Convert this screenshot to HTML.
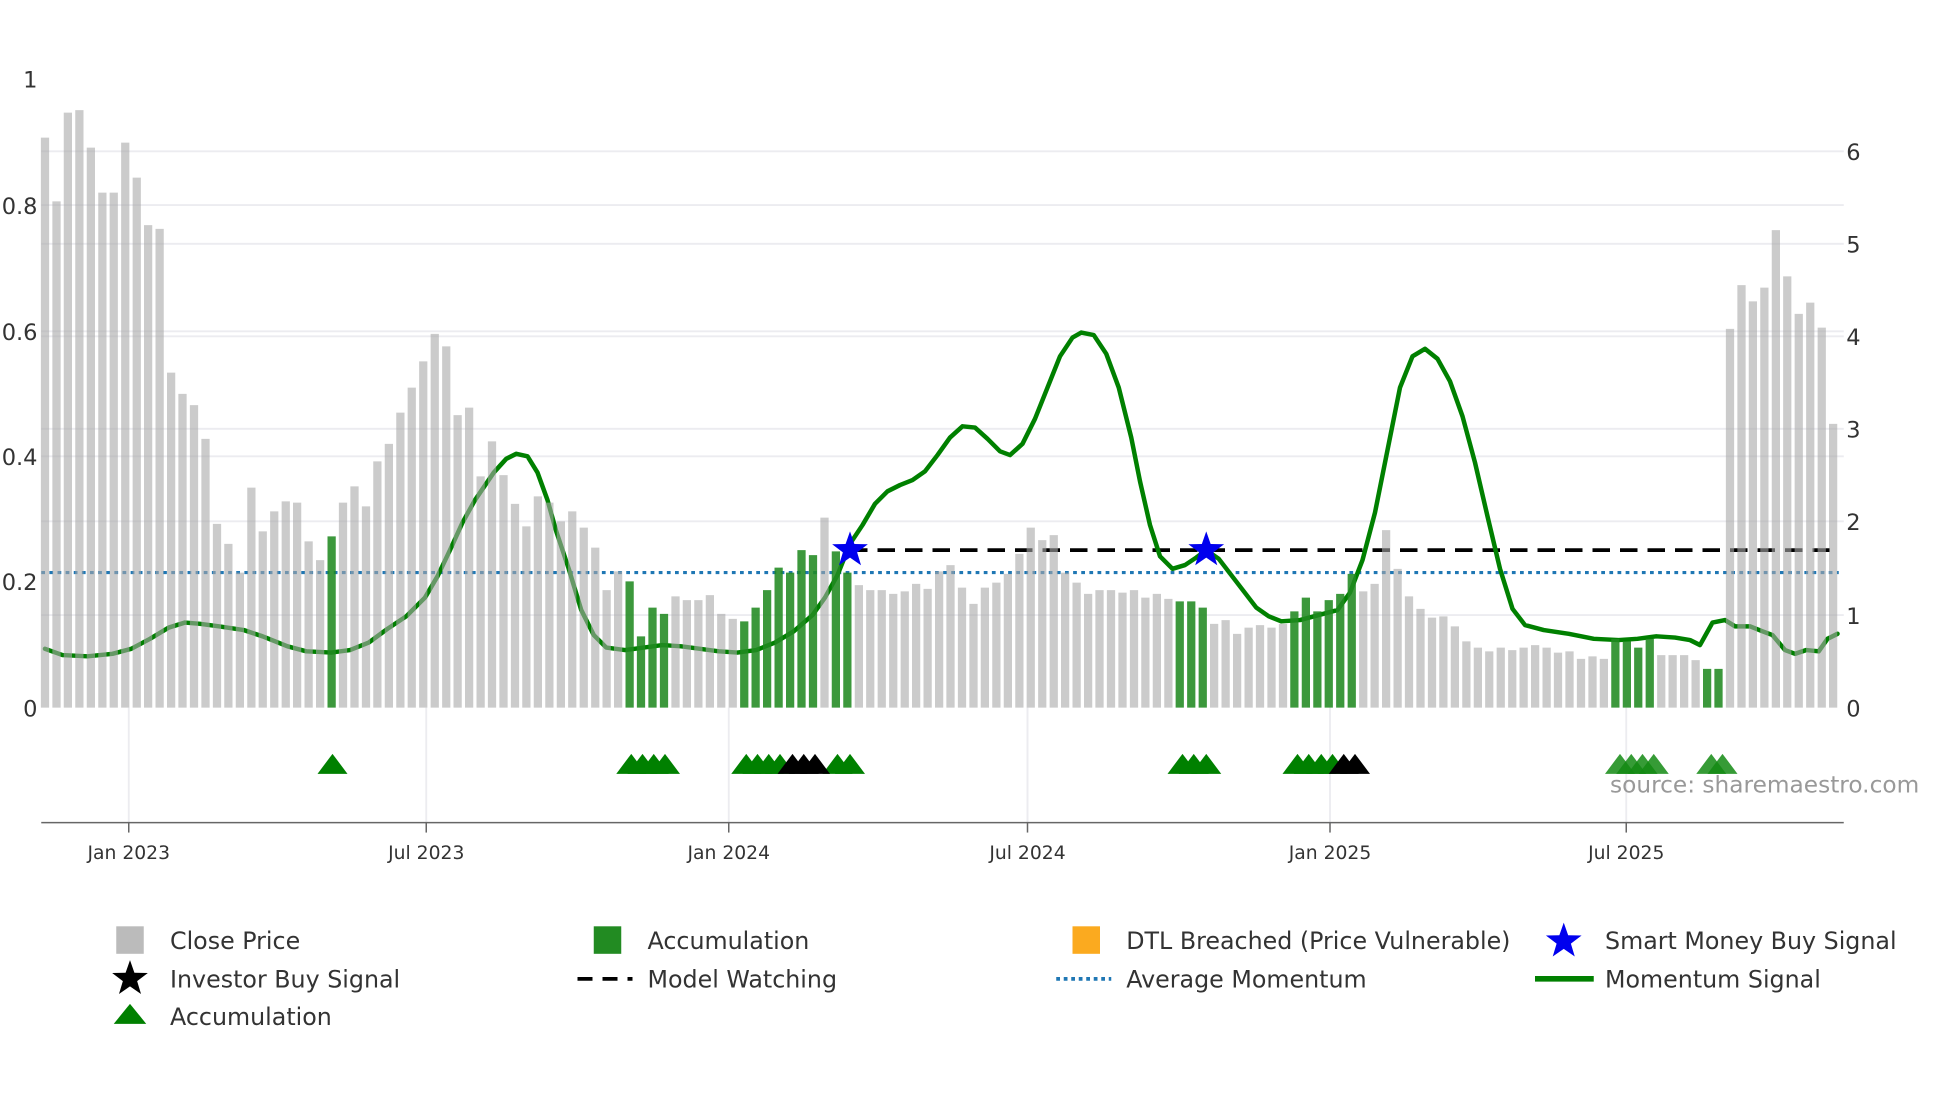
<!DOCTYPE html>
<html><head><meta charset="utf-8"><style>
html,body{margin:0;padding:0;background:#fff;}
svg{display:block;font-family:"DejaVu Sans","Liberation Sans",sans-serif;}
</style></head><body>
<svg width="1960" height="1102" viewBox="0 0 1568 881.5" xmlns="http://www.w3.org/2000/svg">
<g stroke="#ececf0" stroke-width="1.5">
<line x1="33" x2="1475" y1="121" y2="121"/><line x1="33" x2="1475" y1="195" y2="195"/>
<line x1="33" x2="1475" y1="269" y2="269"/><line x1="33" x2="1475" y1="343" y2="343"/>
<line x1="33" x2="1475" y1="417" y2="417"/><line x1="33" x2="1475" y1="492" y2="492"/>
<line x1="33" x2="1475" y1="164" y2="164"/><line x1="33" x2="1475" y1="265" y2="265"/>
<line x1="33" x2="1475" y1="365" y2="365"/>
<line x1="103" x2="103" y1="566" y2="658"/><line x1="341" x2="341" y1="566" y2="658"/>
<line x1="583" x2="583" y1="566" y2="658"/><line x1="822" x2="822" y1="566" y2="658"/>
<line x1="1064" x2="1064" y1="566" y2="658"/><line x1="1301" x2="1301" y1="566" y2="658"/>
</g>
<line x1="33" x2="1471" y1="458" y2="458" stroke="#1f77b4" stroke-width="2.5" stroke-dasharray="3,3.5"/>
<line x1="680" x2="1471" y1="440" y2="440" stroke="#000" stroke-width="3" stroke-dasharray="14,8"/>
<polyline fill="none" stroke="#008000" stroke-width="3.6" stroke-linejoin="round" stroke-linecap="round" points="36,519 50,524 70,525 90,523 105,519 120,511 135,502 148,498 160,499 175,501 195,504 210,509 230,517 245,521 265,522 280,520 295,514 310,503 325,493 340,478 350,461 360,440 370,418 380,400 395,378 405,367 413,363 422,365 430,378 438,400 445,425 455,455 465,488 475,508 485,518 500,520 515,518 530,516 545,517 560,519 575,521 590,522 605,520 620,514 635,505 650,492 660,478 670,460 680,435 690,420 700,403 710,393 720,388 730,384 740,377 750,364 760,350 770,341 780,342 790,351 800,361 808,364 818,355 828,335 838,310 848,285 858,270 865,266 875,268 885,283 895,310 905,350 912,385 920,420 928,445 938,455 948,452 957,446 965,440 975,447 985,460 995,473 1005,486 1015,493 1025,497 1040,496 1055,492 1070,488 1080,474 1090,448 1100,410 1110,360 1120,310 1130,285 1140,279 1150,287 1160,305 1170,333 1180,370 1190,413 1200,455 1210,487 1220,500 1235,504 1255,507 1275,511 1295,512 1310,511 1325,509 1340,510 1352,512 1360,516 1370,498 1380,496 1388,501 1400,501 1410,505 1418,508 1428,520 1436,523 1445,520 1455,521 1462,511 1470,507"/>
<path fill="#a8a8a8" fill-opacity="0.6" d="M32.7 110h6.6V566h-6.6z M41.9 161h6.6V566h-6.6z M51 90h6.6V566h-6.6z M60.2 88h6.6V566h-6.6z M69.4 118h6.6V566h-6.6z M78.6 154h6.6V566h-6.6z M87.7 154h6.6V566h-6.6z M96.9 114h6.6V566h-6.6z M106.1 142h6.6V566h-6.6z M115.2 180h6.6V566h-6.6z M124.4 183h6.6V566h-6.6z M133.6 298h6.6V566h-6.6z M142.7 315h6.6V566h-6.6z M151.9 324h6.6V566h-6.6z M161.1 351h6.6V566h-6.6z M170.3 419h6.6V566h-6.6z M179.4 435h6.6V566h-6.6z M188.6 458h6.6V566h-6.6z M197.8 390h6.6V566h-6.6z M206.9 425h6.6V566h-6.6z M216.1 409h6.6V566h-6.6z M225.3 401h6.6V566h-6.6z M234.4 402h6.6V566h-6.6z M243.6 433h6.6V566h-6.6z M252.8 448h6.6V566h-6.6z M271.1 402h6.6V566h-6.6z M280.3 389h6.6V566h-6.6z M289.5 405h6.6V566h-6.6z M298.6 369h6.6V566h-6.6z M307.8 355h6.6V566h-6.6z M317 330h6.6V566h-6.6z M326.1 310h6.6V566h-6.6z M335.3 289h6.6V566h-6.6z M344.5 267h6.6V566h-6.6z M353.7 277h6.6V566h-6.6z M362.8 332h6.6V566h-6.6z M372 326h6.6V566h-6.6z M381.2 381h6.6V566h-6.6z M390.3 353h6.6V566h-6.6z M399.5 380h6.6V566h-6.6z M408.7 403h6.6V566h-6.6z M417.8 421h6.6V566h-6.6z M427 397h6.6V566h-6.6z M436.2 402h6.6V566h-6.6z M445.4 417h6.6V566h-6.6z M454.5 409h6.6V566h-6.6z M463.7 422h6.6V566h-6.6z M472.9 438h6.6V566h-6.6z M482 472h6.6V566h-6.6z M491.2 457h6.6V566h-6.6z M537.1 477h6.6V566h-6.6z M546.2 480h6.6V566h-6.6z M555.4 480h6.6V566h-6.6z M564.6 476h6.6V566h-6.6z M573.7 491h6.6V566h-6.6z M582.9 495h6.6V566h-6.6z M656.3 414h6.6V566h-6.6z M683.8 468h6.6V566h-6.6z M692.9 472h6.6V566h-6.6z M702.1 472h6.6V566h-6.6z M711.3 475h6.6V566h-6.6z M720.5 473h6.6V566h-6.6z M729.6 467h6.6V566h-6.6z M738.8 471h6.6V566h-6.6z M748 457h6.6V566h-6.6z M757.1 452h6.6V566h-6.6z M766.3 470h6.6V566h-6.6z M775.5 483h6.6V566h-6.6z M784.6 470h6.6V566h-6.6z M793.8 466h6.6V566h-6.6z M803 459h6.6V566h-6.6z M812.2 443h6.6V566h-6.6z M821.3 422h6.6V566h-6.6z M830.5 432h6.6V566h-6.6z M839.7 428h6.6V566h-6.6z M848.8 458h6.6V566h-6.6z M858 466h6.6V566h-6.6z M867.2 475h6.6V566h-6.6z M876.3 472h6.6V566h-6.6z M885.5 472h6.6V566h-6.6z M894.7 474h6.6V566h-6.6z M903.9 472h6.6V566h-6.6z M913 478h6.6V566h-6.6z M922.2 475h6.6V566h-6.6z M931.4 479h6.6V566h-6.6z M968 499h6.6V566h-6.6z M977.2 496h6.6V566h-6.6z M986.4 507h6.6V566h-6.6z M995.6 502h6.6V566h-6.6z M1004.7 500h6.6V566h-6.6z M1013.9 502h6.6V566h-6.6z M1023.1 499h6.6V566h-6.6z M1087.3 473h6.6V566h-6.6z M1096.4 467h6.6V566h-6.6z M1105.6 424h6.6V566h-6.6z M1114.8 455h6.6V566h-6.6z M1123.9 477h6.6V566h-6.6z M1133.1 487h6.6V566h-6.6z M1142.3 494h6.6V566h-6.6z M1151.4 493h6.6V566h-6.6z M1160.6 501h6.6V566h-6.6z M1169.8 513h6.6V566h-6.6z M1179 518h6.6V566h-6.6z M1188.1 521h6.6V566h-6.6z M1197.3 518h6.6V566h-6.6z M1206.5 520h6.6V566h-6.6z M1215.6 518h6.6V566h-6.6z M1224.8 516h6.6V566h-6.6z M1234 518h6.6V566h-6.6z M1243.1 522h6.6V566h-6.6z M1252.3 521h6.6V566h-6.6z M1261.5 527h6.6V566h-6.6z M1270.7 525h6.6V566h-6.6z M1279.8 527h6.6V566h-6.6z M1325.7 524h6.6V566h-6.6z M1334.8 524h6.6V566h-6.6z M1344 524h6.6V566h-6.6z M1353.2 528h6.6V566h-6.6z M1380.7 263h6.6V566h-6.6z M1389.9 228h6.6V566h-6.6z M1399 241h6.6V566h-6.6z M1408.2 230h6.6V566h-6.6z M1417.4 184h6.6V566h-6.6z M1426.5 221h6.6V566h-6.6z M1435.7 251h6.6V566h-6.6z M1444.9 242h6.6V566h-6.6z M1454.1 262h6.6V566h-6.6z M1463.2 339h6.6V566h-6.6z"/>
<path fill="#218a21" fill-opacity="0.88" d="M262 429h6.6V566h-6.6z M500.4 465h6.6V566h-6.6z M509.5 509h6.6V566h-6.6z M518.7 486h6.6V566h-6.6z M527.9 491h6.6V566h-6.6z M592.1 497h6.6V566h-6.6z M601.2 486h6.6V566h-6.6z M610.4 472h6.6V566h-6.6z M619.6 454h6.6V566h-6.6z M628.8 458h6.6V566h-6.6z M637.9 440h6.6V566h-6.6z M647.1 444h6.6V566h-6.6z M665.4 441h6.6V566h-6.6z M674.6 458h6.6V566h-6.6z M940.5 481h6.6V566h-6.6z M949.7 481h6.6V566h-6.6z M958.9 486h6.6V566h-6.6z M1032.2 489h6.6V566h-6.6z M1041.4 478h6.6V566h-6.6z M1050.6 489h6.6V566h-6.6z M1059.7 480h6.6V566h-6.6z M1068.9 475h6.6V566h-6.6z M1078.1 459h6.6V566h-6.6z M1289 511h6.6V566h-6.6z M1298.2 513h6.6V566h-6.6z M1307.3 518h6.6V566h-6.6z M1316.5 511h6.6V566h-6.6z M1362.4 535h6.6V566h-6.6z M1371.5 535h6.6V566h-6.6z"/>
<g fill="#008000">
<polygon points="254,619 266,603 278,619"/>
<polygon points="493,619 505,603 517,619"/><polygon points="502,619 514,603 526,619"/><polygon points="511,619 523,603 535,619"/><polygon points="520,619 532,603 544,619"/>
<polygon points="585,619 597,603 609,619"/><polygon points="594,619 606,603 618,619"/><polygon points="603,619 615,603 627,619"/><polygon points="612,619 624,603 636,619"/>
<polygon points="658,619 670,603 682,619"/><polygon points="668,619 680,603 692,619"/>
<polygon points="934,619 946,603 958,619"/><polygon points="943,619 955,603 967,619"/><polygon points="953,619 965,603 977,619"/>
<polygon points="1026,619 1038,603 1050,619"/><polygon points="1035,619 1047,603 1059,619"/><polygon points="1045,619 1057,603 1069,619"/><polygon points="1054,619 1066,603 1078,619"/>
</g>
<g fill="#000">
<polygon points="622,619 634,603 646,619"/><polygon points="631,619 643,603 655,619"/><polygon points="640,619 652,603 664,619"/>
<polygon points="1063,619 1075,603 1087,619"/><polygon points="1072,619 1084,603 1096,619"/>
</g>
<g fill="#138a13" fill-opacity="0.85">
<polygon points="1284,619 1296,603 1308,619"/><polygon points="1293,619 1305,603 1317,619"/><polygon points="1302,619 1314,603 1326,619"/><polygon points="1311,619 1323,603 1335,619"/>
<polygon points="1357,619 1369,603 1381,619"/><polygon points="1366,619 1378,603 1390,619"/>
</g>
<g fill="#0000ee">
<polygon transform="translate(680,440)" points="0,-15 3.53,-4.85 14.27,-4.64 5.71,1.85 8.82,12.14 0,6 -8.82,12.14 -5.71,1.85 -14.27,-4.64 -3.53,-4.85"/>
<polygon transform="translate(965,440)" points="0,-15 3.53,-4.85 14.27,-4.64 5.71,1.85 8.82,12.14 0,6 -8.82,12.14 -5.71,1.85 -14.27,-4.64 -3.53,-4.85"/>
</g>
<line x1="33" x2="1475" y1="658" y2="658" stroke="#666" stroke-width="1.2"/>
<g stroke="#666" stroke-width="1.2">
<line x1="103" x2="103" y1="658" y2="666"/><line x1="341" x2="341" y1="658" y2="666"/>
<line x1="583" x2="583" y1="658" y2="666"/><line x1="822" x2="822" y1="658" y2="666"/>
<line x1="1064" x2="1064" y1="658" y2="666"/><line x1="1301" x2="1301" y1="658" y2="666"/>
</g>
<g font-size="15" fill="#333" text-anchor="middle">
<text x="103" y="687">Jan 2023</text><text x="341" y="687">Jul 2023</text>
<text x="583" y="687">Jan 2024</text><text x="822" y="687">Jul 2024</text>
<text x="1064" y="687">Jan 2025</text><text x="1301" y="687">Jul 2025</text>
</g>
<g font-size="18" fill="#333" text-anchor="end">
<text x="30" y="70">1</text><text x="30" y="171">0.8</text><text x="30" y="272">0.6</text>
<text x="30" y="372">0.4</text><text x="30" y="472">0.2</text><text x="30" y="573">0</text>
</g>
<g font-size="18" fill="#333">
<text x="1477" y="128">6</text><text x="1477" y="202">5</text><text x="1477" y="276">4</text>
<text x="1477" y="350">3</text><text x="1477" y="424">2</text><text x="1477" y="499">1</text><text x="1477" y="573">0</text>
</g>
<text x="1288" y="634" font-size="18.6" fill="#999">source: sharemaestro.com</text>
<g font-size="19" fill="#333">
<rect x="93" y="741" width="22" height="22" fill="#bbb"/><text x="136" y="759">Close Price</text>
<rect x="475" y="741" width="22" height="22" fill="#228b22"/><text x="518" y="759">Accumulation</text>
<rect x="858" y="741" width="22" height="22" fill="#fbaa1f"/><text x="901" y="759">DTL Breached (Price Vulnerable)</text>
<polygon transform="translate(1251,753)" fill="#0000ee" points="0,-15 3.53,-4.85 14.27,-4.64 5.71,1.85 8.82,12.14 0,6 -8.82,12.14 -5.71,1.85 -14.27,-4.64 -3.53,-4.85"/><text x="1284" y="759">Smart Money Buy Signal</text>
<polygon transform="translate(104,783)" fill="#000" points="0,-15 3.53,-4.85 14.27,-4.64 5.71,1.85 8.82,12.14 0,6 -8.82,12.14 -5.71,1.85 -14.27,-4.64 -3.53,-4.85"/><text x="136" y="790">Investor Buy Signal</text>
<line x1="462" x2="506" y1="783" y2="783" stroke="#000" stroke-width="3" stroke-dasharray="12,8"/><text x="518" y="790">Model Watching</text>
<line x1="845" x2="889" y1="783" y2="783" stroke="#1f77b4" stroke-width="3" stroke-dasharray="3,3"/><text x="901" y="790">Average Momentum</text>
<line x1="1228" x2="1275" y1="783" y2="783" stroke="#008000" stroke-width="4.5"/><text x="1284" y="790">Momentum Signal</text>
<polygon points="91,819 104,803 117,819" fill="#008000"/><text x="136" y="820">Accumulation</text>
</g>
</svg>
</body></html>
